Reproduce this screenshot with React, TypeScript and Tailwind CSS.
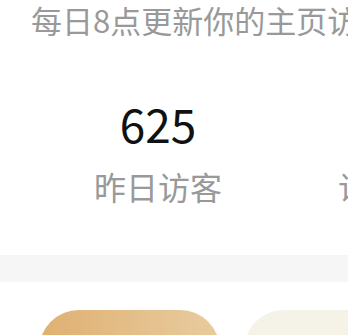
const font = "font-['Noto_Sans_CJK_SC','Noto_Sans',sans-serif]"

function Stat({ value, label }: { value: string; label: string }) {
  return (
    <div className="flex w-[244px] shrink-0 flex-col items-center">
      <div className="h-[56px] text-[46px] leading-[56px] text-[#111]">{value}</div>
      <div className="mt-[15px] h-[40px] whitespace-nowrap text-[32px] leading-[40px] text-[#999]">{label}</div>
    </div>
  )
}

export default function App() {
  return (
    <div className={`h-[335px] w-full overflow-hidden bg-white ${font}`}>
      <p className="h-[40px] whitespace-nowrap pl-[31px] text-[31px] leading-[40px] text-[#999]">
        每日8点更新你的主页访客数据
      </p>

      <div className="mt-[55px] flex pl-[36px]">
        <Stat value="625" label="昨日访客" />
        <Stat value="1,208" label="访问次数" />
      </div>

      <div className="mt-[49px] h-[27px] bg-[#f6f6f6]" />

      <div className="mt-[28px] flex gap-[24px] pl-[39px]">
        <button className="flex h-[80px] w-[181px] shrink-0 items-center justify-center rounded-full bg-gradient-to-r from-[#dfb072] to-[#e8cc9f] text-[32px] text-white">
          去分享
        </button>
        <button className="flex h-[80px] w-[180px] shrink-0 items-center justify-center rounded-full bg-[#f5f2e7] text-[32px] text-[#b08a55]">
          看详情
        </button>
      </div>
    </div>
  )
}
